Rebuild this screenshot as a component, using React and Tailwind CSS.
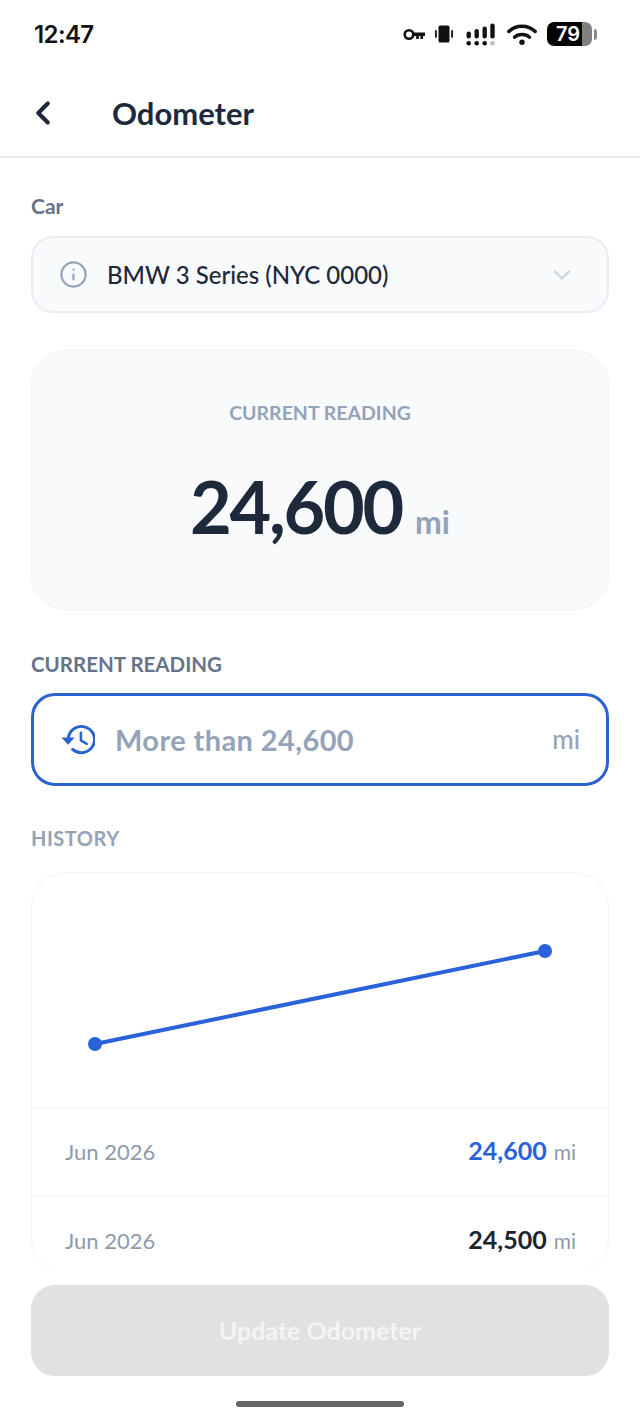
import { ChevronLeft, ChevronDown, Info } from "lucide-react";

function StatusIcons() {
  return (
    <div className="flex items-center">
      {/* key */}
      <svg width="22" height="13" viewBox="0 0 22 13" className="mr-[10px]">
        <circle cx="6" cy="6.5" r="4.3" fill="none" stroke="#111" strokeWidth="2.6" />
        <path d="M9.5 4.6H22v3.4h-2v3h-2.6V8h-1.6v3h-2.6V8H9.5z" fill="#111" />
      </svg>
      {/* vibrate */}
      <svg width="18" height="18" viewBox="0 0 18 18" className="mr-[13px]">
        <rect x="3.5" y="0.5" width="11" height="17" rx="1.5" fill="#111" />
        <rect x="0" y="5" width="1.8" height="8" rx="0.9" fill="#111" />
        <rect x="16.2" y="5" width="1.8" height="8" rx="0.9" fill="#111" />
      </svg>
      {/* signal */}
      <svg width="29" height="23" viewBox="0 0 29 23" className="mr-[12px]">
        <rect x="0.5" y="8.5" width="4.4" height="7" rx="2.2" fill="#111" />
        <rect x="8.5" y="6" width="4.4" height="9.5" rx="2.2" fill="#111" />
        <rect x="16.5" y="3.5" width="4.4" height="12" rx="2.2" fill="#111" />
        <rect x="24.3" y="0.5" width="4.4" height="15" rx="2.2" fill="#111" />
        <circle cx="2.7" cy="20.2" r="2.3" fill="#111" />
        <circle cx="10.7" cy="20.2" r="2.3" fill="#111" />
        <circle cx="18.7" cy="20.2" r="2.3" fill="#111" />
        <circle cx="26.5" cy="20.2" r="2.3" fill="#bbb" />
      </svg>
      {/* wifi */}
      <svg width="30" height="22" viewBox="0 0 30 22" className="mr-[10px]">
        <path d="M1.8 8.5C9 1.5 21 1.5 28.2 8.5" fill="none" stroke="#111" strokeWidth="3.4" strokeLinecap="round" />
        <path d="M7.5 14.2C11.5 10.5 18.5 10.5 22.5 14.2" fill="none" stroke="#111" strokeWidth="3.4" strokeLinecap="round" />
        <circle cx="15" cy="19.2" r="2.7" fill="#111" />
      </svg>
      {/* battery */}
      <div className="flex items-center">
        <div className="relative flex h-[24px] w-[45px] overflow-hidden rounded-[7px]">
          <div className="w-[35px] bg-[#050505]" />
          <div className="flex-1 bg-[#808080]" />
          <span className="absolute left-[9px] top-0 font-['Inter',sans-serif] text-[20px] font-semibold leading-[24px] text-white">79</span>
        </div>
        <div className="ml-[2px] h-[11px] w-[3px] rounded-r-sm bg-[#888]" />
      </div>
    </div>
  );
}

function HistoryIcon() {
  return (
    <svg width="34" height="35" viewBox="0 0 35 35" className="shrink-0">
      <path d="M7.5 17.5A13.5 13.5 0 1 1 12 27.6" fill="none" stroke="#2a62d0" strokeWidth="3" strokeLinecap="round" />
      <path d="M0.5 15.5h13.5L7.3 23z" fill="#2a62d0" />
      <path d="M20.5 10.5v8l6 3.5" fill="none" stroke="#2a62d0" strokeWidth="2.6" strokeLinecap="round" strokeLinejoin="round" />
    </svg>
  );
}

function HistoryRow({ date, value, blue }) {
  return (
    <div className="flex h-[89px] shrink-0 items-center justify-between border-t border-[#f1f3f6] pb-[2px] pl-[33px] pr-[32px]">
      <span className="text-[22px] text-[#8e99ab]">{date}</span>
      <span className="flex items-baseline">
        <span className={"text-[25px] font-bold " + (blue ? "text-[#2a62d9]" : "text-[#1c2333]")}>{value}</span>
        <span className="ml-[7px] text-[21px] text-[#8e99ab]">mi</span>
      </span>
    </div>
  );
}

export default function App() {
  return (
    <div className="flex h-[1423px] w-[640px] flex-col overflow-hidden bg-white font-['Lato',sans-serif]">
      <div className="flex h-[68px] shrink-0 items-center justify-between pl-[34px] pr-[43px]">
        <span className="pt-[2px] font-['Inter',sans-serif] text-[24px] font-semibold tracking-[-0.6px] text-[#111]">12:47</span>
        <StatusIcons />
      </div>

      <div className="flex h-[90px] shrink-0 items-center border-b-2 border-[#e9ebee] pt-[2px] pl-[24px]">
        <ChevronLeft size={38} strokeWidth={2.6} className="text-[#1e293b]" />
        <span className="ml-[50px] text-[31px] font-bold text-[#1e293b]">Odometer</span>
      </div>

      <div className="flex min-h-0 flex-1 flex-col overflow-hidden px-[31px]">
        <div className="mt-[34px] text-[21px] font-bold leading-[28px] text-[#64748b]">Car</div>
        <div className="mt-[16px] flex h-[77px] shrink-0 items-center rounded-[22px] border-2 border-[#e9edf3] bg-[#f8fafc] pl-[26px] pr-[31px]">
          <Info size={29} strokeWidth={1.8} className="text-[#94a3b8]" />
          <span className="ml-[19px] flex-1 text-[24px] font-medium text-[#1e293b]">BMW 3 Series (NYC 0000)</span>
          <ChevronDown size={28} strokeWidth={2} className="text-[#cbd5e1]" />
        </div>

        <div className="mt-[37px] flex h-[260px] shrink-0 flex-col items-center rounded-[34px] border border-[#f0f3f7] bg-[#f8fafc]">
          <span className="mt-[49px] text-[19.5px] font-bold leading-[26px] text-[#94a3b8]">CURRENT READING</span>
          <div className="mt-[35px] flex items-baseline">
            <span className="text-[72px] font-bold leading-[90px] tracking-[-2.3px] text-[#1e293b]">24,600</span>
            <span className="ml-[13px] text-[32px] font-bold text-[#94a3b8]">mi</span>
          </div>
        </div>

        <div className="mt-[40px] text-[20.5px] font-bold leading-[28px] text-[#64748b]">CURRENT READING</div>
        <div className="mt-[15px] flex h-[93px] shrink-0 items-center rounded-[24px] border-[3px] border-[#2a62d0] pl-[27px] pr-[26px]">
          <HistoryIcon />
          <span className="ml-[20px] flex-1 text-[29px] font-bold tracking-[0.4px] text-[#94a3b8]">More than 24,600</span>
          <span className="text-[26px] font-medium text-[#94a3b8]">mi</span>
        </div>

        <div className="mt-[38px] text-[20px] font-bold leading-[28px] tracking-[0.5px] text-[#94a3b8]">HISTORY</div>
        <div className="mt-[20px] flex h-[401px] shrink-0 flex-col overflow-hidden rounded-[34px] border border-b-0 border-[#f1f3f6] bg-white">
          <svg width="576" height="234" viewBox="0 0 576 234" className="shrink-0">
            <path d="M63 171L513 78" fill="none" stroke="#2a62d9" strokeWidth="4" strokeLinecap="round" />
            <circle cx="63" cy="171" r="7" fill="#2a62d9" />
            <circle cx="513" cy="78" r="7" fill="#2a62d9" />
          </svg>
          <HistoryRow date="Jun 2026" value="24,600" blue />
          <HistoryRow date="Jun 2026" value="24,500" />
        </div>
      </div>

      <div className="flex h-[150px] shrink-0 flex-col px-[31px]">
        <div className="mt-[12px] flex h-[91px] items-center justify-center rounded-[24px] bg-[#e1e1e1]">
          <span className="text-[25px] font-bold text-[#f4f4f4]">Update Odometer</span>
        </div>
        <div className="mx-auto mt-[25px] h-[6px] w-[168px] rounded-full bg-[#666]" />
      </div>
    </div>
  );
}
